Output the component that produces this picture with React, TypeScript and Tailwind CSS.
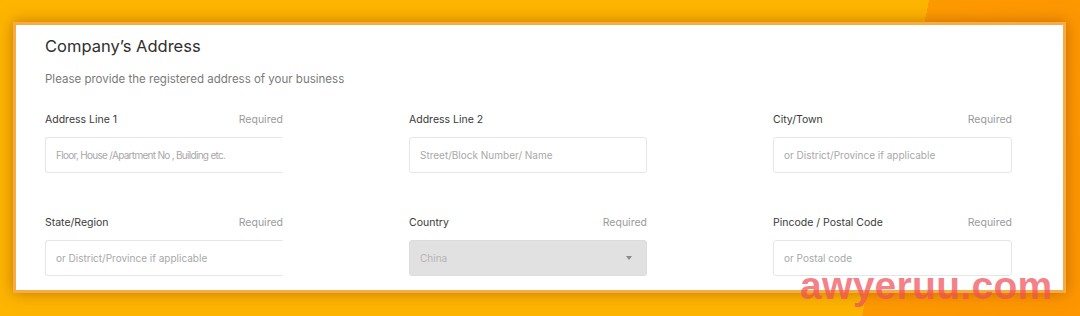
import React from "react";

const font = { fontFamily: "Inter, 'Open Sans', 'Liberation Sans', sans-serif" };

function Field({
  label,
  required,
  placeholder,
  clip,
  select,
  tight,
}: {
  label: string;
  required?: boolean;
  placeholder: string;
  clip?: boolean;
  select?: boolean;
  tight?: boolean;
}) {
  return (
    <div className="flex flex-col">
      <div className="flex h-[16px] items-center justify-between text-[10.5px]">
        <span className="text-[#3a3a3a]">{label}</span>
        {required && <span className="text-[#9a9a9a]">Required</span>}
      </div>
      <div
        className={
          "mt-[9px] flex h-[36px] items-center justify-between rounded-[3px] border px-[10px] text-[10px] " +
          (select
            ? "border-[#dcdcdc] bg-[#e1e1e1] text-[#b4b4b4]"
            : "border-[#e6e6e6] bg-white text-[#a8a8a8]") +
          (clip ? " border-r-transparent rounded-r-none" : "")
        }
      >
        <span className={tight ? "tracking-[-0.7px]" : ""}>{placeholder}</span>
        {select && (
          <svg width="6" height="4" viewBox="0 0 6 4" className="mr-[4px]">
            <path d="M0 0 L6 0 L3 4 Z" fill="#8a8a8a" />
          </svg>
        )}
      </div>
    </div>
  );
}

export default function App() {
  return (
    <div
      className="relative h-[316px] w-[1080px] overflow-hidden bg-[linear-gradient(102deg,#fdb500_0%,#fdb500_81%,#fe9a00_81%,#fd9600_100%)] pl-[13px] pt-[22px]"
      style={font}
    >
      <div className="h-[271px] w-[1053px] border-[3px] border-[#f7ab45] bg-white pl-[29px] pt-[10px] shadow-[0_0_14px_rgba(150,70,0,0.55)]">
        <h1 className="text-[16.5px] leading-[22px] text-[#2f2f2f]">Company’s Address</h1>
        <p className="mt-[14px] text-[11.5px] leading-[16px] text-[#7a7a7a]">
          Please provide the registered address of your business
        </p>
        <div className="mt-[25px] grid grid-cols-[238px_238px_239px] gap-x-[126px] gap-y-[42px]">
          <Field label="Address Line 1" required placeholder="Floor, House /Apartment No , Building etc." clip tight />
          <Field label="Address Line 2" placeholder="Street/Block Number/ Name" />
          <Field label="City/Town" required placeholder="or District/Province if applicable" />
          <Field label="State/Region" required placeholder="or District/Province if applicable" clip />
          <Field label="Country" required placeholder="China" select />
          <Field label="Pincode / Postal Code" required placeholder="or Postal code" />
        </div>
      </div>
      <div
        className="pointer-events-none absolute left-[800px] top-[264px] text-[39px] font-bold leading-[44px] tracking-[0.3px] text-[rgba(240,80,90,0.72)]"
        style={{ fontFamily: "'Liberation Sans', Arial, sans-serif" }}
      >
        awyeruu.com
      </div>
    </div>
  );
}
